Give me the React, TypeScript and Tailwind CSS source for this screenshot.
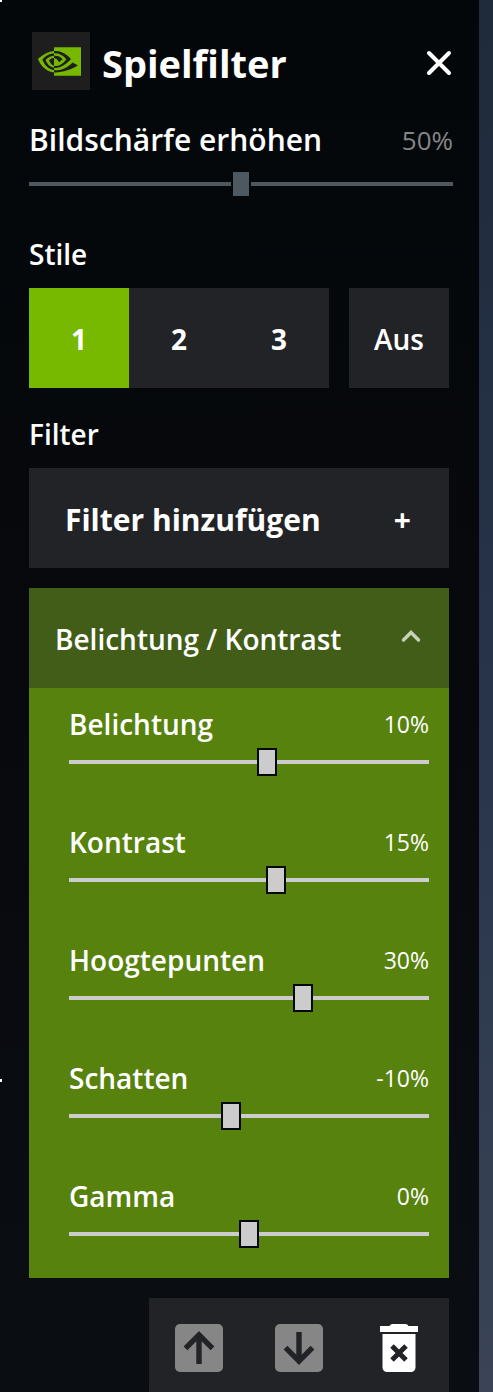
import React, { useState } from "react";
import { SiNvidia } from "react-icons/si";

interface SliderProps {
  label: string;
  min: number;
  max: number;
  start: number;
  type?: "main" | "filter";
}

const filters = [
  { label: "Belichtung", start: 10 },
  { label: "Kontrast", start: 15 },
  { label: "Hoogtepunten", start: 30 },
  { label: "Schatten", start: -10 },
  { label: "Gamma", start: 0 },
];

const styles = ["1", "2", "3"];

// the input is 10px wider than its track on both sides, so the thumb centre can reach the track ends
const rangeBase =
  "block -mx-[10px] w-[calc(100%+20px)] h-7 appearance-none cursor-pointer bg-[length:calc(100%-20px)_4px] bg-center bg-no-repeat [&::-webkit-slider-thumb]:appearance-none [&::-webkit-slider-thumb]:box-border [&::-webkit-slider-thumb]:w-5 [&::-webkit-slider-thumb]:h-7 [&::-webkit-slider-thumb]:border-2 [&::-webkit-slider-thumb]:border-[#05080b]";

const Slider = ({ label, min, max, start, type = "filter" }: SliderProps) => {
  const [value, setValue] = useState(start);
  const id = `slider-${label.replace(/\s/g, "-")}`;

  return (
    <div className={type === "main" ? "pb-10" : "pt-5 pb-[30px]"}>
      <div className="flex items-center justify-between">
        <label
          htmlFor={id}
          className={type === "main" ? "text-[30px] leading-8 font-semibold" : "text-[28px] leading-8 font-semibold"}
        >
          {label}
        </label>
        <output
          htmlFor={id}
          className={type === "main" ? "text-[26px] leading-8 text-[#858585]" : "text-[23px] leading-8"}
        >
          {value}%
        </output>
      </div>
      <div className={type === "main" ? "mt-[14px]" : "mt-2"}>
        <input
          id={id}
          type="range"
          min={min}
          max={max}
          value={value}
          onChange={(e) => setValue(Number(e.target.value))}
          className={
            type === "main"
              ? `${rangeBase} bg-[linear-gradient(#4e5860,#4e5860)] [&::-webkit-slider-thumb]:bg-[#4e5860]`
              : `${rangeBase} bg-[linear-gradient(#cccccc,#cccccc)] [&::-webkit-slider-thumb]:bg-[#cccccc]`
          }
        />
      </div>
    </div>
  );
};

const ArrowIcon = ({ down }: { down?: boolean }) => (
  <svg width="48" height="48" viewBox="0 0 48 48" fill="none" className={down ? "rotate-180" : ""}>
    <rect width="48" height="48" rx="5" fill="#868686" />
    <path d="M10.5 24.3 24 10.9l13.5 13.4M24 11v29" stroke="#222327" strokeWidth="5.4" />
  </svg>
);

const TrashIcon = () => (
  <svg width="48" height="48" viewBox="0 0 48 48" fill="none">
    <path d="M5 2h9.5q1-2 3-2h13q2 0 3 2H43v6H5z" fill="#fff" />
    <path d="M7.500 10h33v33.500a4.500 4.500 0 0 1-4.500 4.500h-24a4.500 4.500 0 0 1-4.500-4.500z" fill="#fff" />
    <path d="m17 22 14 14M31 22 17 36" stroke="#222327" strokeWidth="5" />
  </svg>
);

const App = () => {
  const [active, setActive] = useState("1");
  const [open, setOpen] = useState(true);

  return (
    <main className="relative flex h-screen overflow-hidden bg-linear-to-b from-[#1f2a3a] via-[#27344a] to-[#3a4456] font-['Open_Sans',sans-serif] text-white">
      <section className="flex-1 overflow-y-auto [scrollbar-width:none] bg-linear-to-b from-[#03070a] via-[#08090d] to-[#0a0e13] pl-[29px]">
        <header className="flex items-start pt-8 pl-[3px] pr-[26px]">
          <div className="flex size-[58px] items-center justify-center bg-[#1e1e1e] pr-[3px]">
            <SiNvidia size={43} className="text-[#76b900]" />
          </div>
          <h1 className="ml-3 flex-1 text-[38px] leading-[62px] font-bold">Spielfilter</h1>
          <button aria-label="Schließen" className="flex h-[62px] cursor-pointer items-center">
            <svg width="28" height="28" viewBox="0 0 28 28" fill="none">
              <path d="m4 4 20 20M24 4 4 24" stroke="#fff" strokeWidth="4" strokeLinecap="round" />
            </svg>
          </button>
        </header>

        <div className="pt-[30px] pr-[26px]">
          <Slider label="Bildschärfe erhöhen" min={0} max={100} start={50} type="main" />
        </div>

        <div className="pr-[30px]">
          <h2 className="text-[28px] leading-8 font-semibold">Stile</h2>
          <div className="mt-[18px] flex justify-between">
            <div className="flex">
              {styles.map((item) => (
                <button
                  key={item}
                  onClick={() => setActive(item)}
                  className={`size-[100px] cursor-pointer pt-0.5 text-[28px] font-bold ${active === item ? "bg-[#76b900]" : "bg-[#222327]"}`}
                >
                  {item}
                </button>
              ))}
            </div>
            <button
              onClick={() => setActive("")}
              className={`size-[100px] cursor-pointer pt-0.5 text-[28px] font-semibold ${active === "" ? "bg-[#76b900]" : "bg-[#222327]"}`}
            >
              Aus
            </button>
          </div>

          <h2 className="mt-[30px] text-[28px] leading-8 font-semibold">Filter</h2>
          <button className="mt-[18px] flex h-[100px] w-full cursor-pointer items-center justify-between bg-[#222327] pt-0.5 pl-9 pr-[38px] text-[30px] font-bold">
            <span>Filter hinzufügen</span>
            <span>+</span>
          </button>

          <div className="mt-5 bg-[#57820e]">
            <button
              onClick={() => setOpen(!open)}
              aria-expanded={open}
              className="flex h-[100px] w-full cursor-pointer items-center justify-between bg-[#425d17] pt-0.5 pl-[26px] pr-7 text-[28px] font-semibold"
            >
              <span>Belichtung / Kontrast</span>
              <svg width="20" height="20" viewBox="0 0 20 20" fill="none" className={open ? "" : "rotate-180"}>
                <path d="m2.500 11 7.500-7.500 7.500 7.500" stroke="#c8d1bb" strokeWidth="3.500" strokeLinecap="round" />
              </svg>
            </button>
            {open && (
              <div className="pl-10 pr-5">
                {filters.map((item) => (
                  <Slider key={item.label} label={item.label} min={-100} max={100} start={item.start} />
                ))}
              </div>
            )}
          </div>

          <div className="mt-5 flex justify-end">
            <div className="flex bg-[#222327]">
              <button aria-label="Nach oben" className="flex size-[100px] cursor-pointer items-center justify-center">
                <ArrowIcon />
              </button>
              <button aria-label="Nach unten" className="flex size-[100px] cursor-pointer items-center justify-center">
                <ArrowIcon down />
              </button>
              <button aria-label="Löschen" className="flex size-[100px] cursor-pointer items-center justify-center">
                <TrashIcon />
              </button>
            </div>
          </div>
        </div>
      </section>
      <div className="w-[14px]" />

      {/* bits of the game HUD that show at the edge of the overlay */}
      <span aria-hidden="true" className="absolute top-0 left-0 size-[2px] bg-white" />
      <span aria-hidden="true" className="absolute top-[1079px] left-0 h-[3px] w-[2px] bg-white" />
    </main>
  );
};

export default App;
